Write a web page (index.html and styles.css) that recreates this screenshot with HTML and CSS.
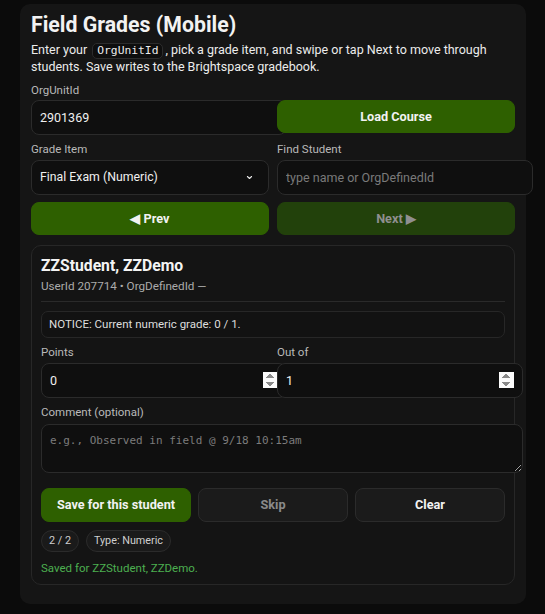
FILE: index.html
```html
<!DOCTYPE html>
<html lang="en">
<head>
<meta charset="utf-8">
<title>Field Grades (Mobile)</title>
<link rel="stylesheet" href="styles.css">
</head>
<body>
<main class="app">
  <h1 class="title">Field Grades (Mobile)</h1>
  <p class="intro">Enter your <code class="code">OrgUnitId</code>, pick a grade item, and swipe or tap Next to move through students. Save writes to the Brightspace gradebook.</p>

  <label class="label label-first" for="ou">OrgUnitId</label>
  <div class="row">
    <input id="ou" class="input" type="text" value="2901369">
    <button class="btn btn-green">Load Course</button>
  </div>

  <div class="row row-fields">
    <div class="field">
      <label class="label" for="gi">Grade Item</label>
      <select id="gi" class="select"><option>Final Exam (Numeric)</option></select>
    </div>
    <div class="field">
      <label class="label" for="fs">Find Student</label>
      <input id="fs" class="input" type="text" placeholder="type name or OrgDefinedId">
    </div>
  </div>

  <div class="row row-nav">
    <button class="btn btn-green">◀ Prev</button>
    <button class="btn btn-green-dim">Next ▶</button>
  </div>

  <section class="student">
    <h2 class="name">ZZStudent, ZZDemo</h2>
    <div class="meta">UserId 207714 • OrgDefinedId —</div>
    <hr class="sep">
    <div class="notice">NOTICE: Current numeric grade: 0 / 1.</div>

    <div class="row row-fields row-grade">
      <div class="field">
        <label class="label" for="pts">Points</label>
        <input id="pts" class="input" type="number" value="0">
      </div>
      <div class="field">
        <label class="label" for="out">Out of</label>
        <input id="out" class="input" type="number" value="1">
      </div>
    </div>

    <label class="label label-comment" for="cm">Comment (optional)</label>
    <textarea id="cm" class="textarea" placeholder="e.g., Observed in field @ 9/18 10:15am"></textarea>

    <div class="actions">
      <button class="btn btn-green">Save for this student</button>
      <button class="btn btn-dark btn-muted">Skip</button>
      <button class="btn btn-dark">Clear</button>
    </div>

    <div class="pills">
      <span class="pill">2 / 2</span>
      <span class="pill">Type: Numeric</span>
    </div>
    <div class="status">Saved for ZZStudent, ZZDemo.</div>
  </section>
</main>
</body>
</html>
```

FILE: styles.css
```css
html, body {
  margin: 0;
  padding: 0;
  background: #0b0b0b;
}
body {
  font-family: Roboto, "Noto Sans", "Liberation Sans", sans-serif;
  color: #ececec;
  padding: 4px 19px 12px 20px;
}
.app {
  background: #151515;
  border-radius: 10px;
  padding: 9px 11px 19px 11px;
}
.title {
  margin: 0;
  font-size: 21.3px;
  line-height: 24px;
  font-weight: 700;
  color: #f2f2f2;
}
.intro {
  margin: 5px 0 0;
  font-size: 12.5px;
  line-height: 16.5px;
  color: #ececec;
}
.code {
  display: inline-block;
  font-family: "DejaVu Sans Mono", "Liberation Mono", monospace;
  font-size: 11.3px;
  line-height: 14px;
  vertical-align: baseline;
  background: #0e0e0e;
  border: 1px solid #2c2c2c;
  border-radius: 5px;
  padding: 0 4px;
  margin: 0 2px;
}
.label {
  display: block;
  font-size: 11.5px;
  line-height: 14px;
  color: #b9b9b9;
  margin-bottom: 4px;
}
.label-first {
  margin-top: 7px;
  margin-bottom: 3px;
}
.row {
  display: grid;
  grid-template-columns: 1fr 1fr;
  column-gap: 8px;
  align-items: start;
}
.row-fields {
  margin-top: 7px;
}
.row-nav {
  margin-top: 7px;
}
.field {
  min-width: 0;
}
.input {
  display: block;
  width: 100%;
  box-sizing: content-box;
  background: #0f0f0f;
  border: 1px solid #2b2b2b;
  border-radius: 8px;
  padding: 8px;
  font-family: inherit;
  font-size: 12.5px;
  line-height: 17px;
  height: 17px;
  color: #f0f0f0;
  outline: none;
}
.input::placeholder {
  color: #7a7a7a;
}
.input::-webkit-inner-spin-button {
  opacity: 1;
}
.select {
  display: block;
  width: 100%;
  height: 35px;
  box-sizing: border-box;
  -webkit-appearance: none;
  appearance: none;
  background-color: #0f0f0f;
  background-image: url("data:image/svg+xml;utf8,<svg xmlns='http://www.w3.org/2000/svg' width='8' height='6' viewBox='0 0 8 6'><path d='M1.5 1.8 L4 4.2 L6.5 1.8' fill='none' stroke='%23e8e8e8' stroke-width='1.3' stroke-linecap='round' stroke-linejoin='round'/></svg>");
  background-repeat: no-repeat;
  background-position: right 15px center;
  background-size: 7px 5px;
  border: 1px solid #2b2b2b;
  border-radius: 8px;
  padding: 0 26px 0 8px;
  font-family: inherit;
  font-size: 12.3px;
  color: #f0f0f0;
  outline: none;
}
.btn {
  display: block;
  width: 100%;
  height: 33px;
  border: 1px solid transparent;
  border-radius: 8px;
  font-family: inherit;
  font-size: 12.7px;
  font-weight: 700;
  color: #f2f2f2;
  cursor: pointer;
}
.btn-green {
  background: #2e6000;
  border-color: #2e6000;
}
.btn-green-dim {
  background: #22410b;
  border-color: #22410b;
  color: #8f8f8f;
}
.btn-dark {
  background: #1b1b1b;
  border-color: #2b2b2b;
}
.btn-muted {
  color: #8a8a8a;
}
.student {
  margin-top: 10px;
  border: 1px solid #272727;
  border-radius: 10px;
  background: #141414;
  padding: 10px 9px 8px 9px;
}
.name {
  margin: 0;
  font-size: 15.7px;
  line-height: 20px;
  font-weight: 700;
  color: #f4f4f4;
}
.meta {
  margin-top: 2px;
  font-size: 11.7px;
  line-height: 16px;
  color: #ababab;
}
.sep {
  border: 0;
  border-top: 1px solid #2a2a2a;
  margin: 7px 0 9px;
}
.notice {
  border: 1px solid #272727;
  border-radius: 7px;
  background: #121212;
  padding: 5px 7px;
  font-size: 11.5px;
  line-height: 15px;
  color: #dedede;
}
.student .row-grade {
  margin-top: 7px;
}
.label-comment {
  margin-top: 7px;
  margin-bottom: 5px;
}
.textarea {
  display: block;
  width: 100%;
  box-sizing: content-box;
  height: 31px;
  background: #0f0f0f;
  border: 1px solid #2b2b2b;
  border-radius: 8px;
  padding: 8px;
  font-family: "DejaVu Sans Mono", "Liberation Mono", monospace;
  font-size: 11px;
  line-height: 15px;
  color: #f0f0f0;
  outline: none;
  resize: vertical;
}
.textarea::placeholder {
  color: #7c7c7c;
}
.actions {
  margin-top: 15px;
  display: grid;
  grid-template-columns: 1fr 1fr 1fr;
  column-gap: 7px;
}
.actions .btn {
  height: 34px;
}
.pills {
  margin-top: 8px;
  display: flex;
  gap: 7px;
}
.pill {
  display: inline-block;
  height: 20px;
  line-height: 20px;
  padding: 0 7px;
  border: 1px solid #2b2b2b;
  border-radius: 999px;
  background: #1a1a1a;
  font-size: 10.8px;
  color: #cfcfcf;
}
.status {
  margin-top: 8px;
  font-size: 11.5px;
  line-height: 16px;
  color: #4caf50;
}
```
